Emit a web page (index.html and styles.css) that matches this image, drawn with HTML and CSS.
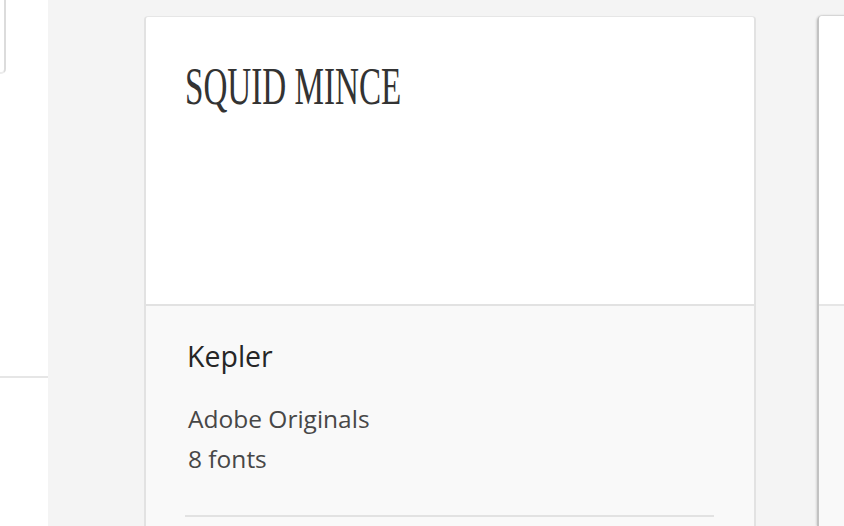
FILE: index.html
```html
<!DOCTYPE html>
<html>
<head>
<meta charset="utf-8">
<link rel="stylesheet" href="styles.css">
</head>
<body>
<div class="page">
  <aside class="side">
    <div class="side-card"></div>
    <div class="side-rule"></div>
  </aside>
  <main class="grid">
    <article class="card">
      <div class="preview">
        <span class="sample">SQUID MINCE</span>
      </div>
      <div class="info">
        <h2 class="name">Kepler</h2>
        <p class="meta">Adobe Originals<br>8 fonts</p>
        <div class="rule"></div>
      </div>
    </article>
    <article class="card card-active">
      <div class="preview"></div>
      <div class="info"></div>
    </article>
  </main>
</div>
</body>
</html>
```

FILE: styles.css
```css
html, body {
  margin: 0;
  padding: 0;
  width: 844px;
  height: 526px;
  overflow: hidden;
  background: #f4f4f4;
}
.page {
  display: flex;
  width: 844px;
  height: 526px;
}
.side {
  width: 48px;
  flex-shrink: 0;
  background: #ffffff;
  display: flex;
  flex-direction: column;
}
.side-card {
  width: 4px;
  height: 72px;
  border-right: 2px solid #dcdcdc;
  border-bottom: 2px solid #ececec;
  border-bottom-right-radius: 5px;
}
.side-rule {
  margin-top: 302px;
  height: 2px;
  background: #e6e6e6;
}
.grid {
  flex: 1;
  display: flex;
  gap: 61px;
  padding: 16px 0 0 96px;
  overflow: hidden;
  background: #f4f4f4;
}
.card {
  width: 608px;
  flex-shrink: 0;
  border: 2px solid #e2e2e2;
  border-top: 1px solid #e6e6e6;
  border-bottom: none;
  border-radius: 4px 4px 0 0;
  background: #f9f9f9;
  display: flex;
  flex-direction: column;
}
.card-active {
  border-color: #c2c2c2;
  border-top-color: #d6d6d6;
  border-radius: 6px 6px 0 0;
  box-shadow: -1px 0 2px rgba(0, 0, 0, 0.12);
  margin-top: -1px;
}
.preview {
  height: 245px;
  padding: 42px 39px 0;
  background: #ffffff;
  border-bottom: 2px solid #e2e2e2;
  border-radius: 3px 3px 0 0;
}
.card-active .preview {
  height: 288px;
  padding: 0;
  border-bottom-color: #e6e6e6;
}
.sample {
  display: inline-block;
  font-family: "Liberation Serif", serif;
  font-size: 53px;
  line-height: 54px;
  color: #333333;
  white-space: nowrap;
  transform: scaleX(0.625);
  transform-origin: left center;
}
.info {
  flex: 1;
  padding: 32px 40px 0 39px;
  font-family: "Open Sans", sans-serif;
}
.name {
  margin: 0;
  padding-left: 2px;
  font-size: 28.5px;
  line-height: 36px;
  font-weight: 400;
  color: #262626;
}
.meta {
  margin: 25px 0 0;
  padding-left: 3px;
  font-size: 24.5px;
  line-height: 40px;
  color: #474747;
}
.rule {
  margin-top: 36px;
  height: 2px;
  background: #e2e2e2;
}
```
